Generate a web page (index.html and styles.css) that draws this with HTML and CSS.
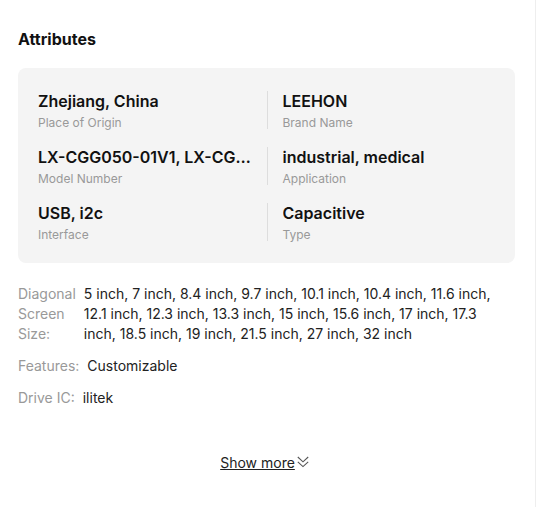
FILE: index.html
```html
<!DOCTYPE html>
<html lang="en">
<head>
    <meta charset="UTF-8">
    <meta name="viewport" content="width=device-width, initial-scale=1.0">
    <title>Attributes</title>
    <link rel="stylesheet" href="styles.css">
</head>
<body>
    <div class="panel">
        <h2 class="panel-title">Attributes</h2>

        <div class="attr-card">
            <div class="attr-item">
                <div class="attr-value">Zhejiang, China</div>
                <div class="attr-label">Place of Origin</div>
            </div>
            <div class="attr-item">
                <div class="attr-value">LEEHON</div>
                <div class="attr-label">Brand Name</div>
            </div>
            <div class="attr-item">
                <div class="attr-value">LX-CGG050-01V1, LX-CGG070-01V1, LX-CGG101-01V1</div>
                <div class="attr-label">Model Number</div>
            </div>
            <div class="attr-item">
                <div class="attr-value">industrial, medical</div>
                <div class="attr-label">Application</div>
            </div>
            <div class="attr-item">
                <div class="attr-value">USB, i2c</div>
                <div class="attr-label">Interface</div>
            </div>
            <div class="attr-item">
                <div class="attr-value">Capacitive</div>
                <div class="attr-label">Type</div>
            </div>
        </div>

        <div class="spec-list">
            <div class="spec-row">
                <span class="spec-label">Diagonal Screen Size:</span>
                <span class="spec-value">5 inch, 7 inch, 8.4 inch, 9.7 inch, 10.1 inch, 10.4 inch, 11.6 inch, 12.1 inch, 12.3 inch, 13.3 inch, 15 inch, 15.6 inch, 17 inch, 17.3 inch, 18.5 inch, 19 inch, 21.5 inch, 27 inch, 32 inch</span>
            </div>
            <div class="spec-row">
                <span class="spec-label">Features:</span>
                <span class="spec-value">Customizable</span>
            </div>
            <div class="spec-row">
                <span class="spec-label">Drive&nbsp;IC:</span>
                <span class="spec-value">ilitek</span>
            </div>
        </div>

        <div class="more">
            <a href="#" class="more-link">Show more</a>
            <svg class="more-icon" width="12" height="12" viewBox="0 0 12 12" fill="none" stroke="currentColor" stroke-width="1.1">
                <path d="M0.8 1l5.2 4.8 5.2-4.8"/>
                <path d="M0.8 5.8l5.2 4.8 5.2-4.8"/>
            </svg>
        </div>
    </div>
</body>
</html>
```

FILE: styles.css
```css
* {
    margin: 0;
    padding: 0;
    box-sizing: border-box;
}

body {
    font-family: Inter, 'Noto Sans', sans-serif;
    background: white;
    color: #111;
}

.panel {
    width: 536px;
    min-height: 507px;
    border-right: 1px solid #eee;
    padding: 28px 20px 0 18px;
}

.panel-title {
    font-size: 16px;
    line-height: 23px;
    font-weight: 700;
    margin-bottom: 17px;
}

.attr-card {
    background: #f4f4f4;
    border-radius: 8px;
    padding: 23px 20px 22px;
    display: grid;
    grid-template-columns: 1fr 1fr;
    row-gap: 18px;
}

.attr-item {
    min-width: 0;
    padding-right: 12px;
}

.attr-item:nth-child(even) {
    border-left: 1px solid #ddd;
    padding-left: 15px;
}

.attr-value {
    font-size: 16px;
    line-height: 20px;
    font-weight: 600;
    white-space: nowrap;
    overflow: hidden;
    text-overflow: ellipsis;
}

.attr-label {
    font-size: 12px;
    line-height: 12px;
    color: #999;
    margin-top: 6px;
}

.spec-list {
    margin-top: 21px;
    padding-right: 16px;
    display: flex;
    flex-direction: column;
    gap: 12px;
    font-size: 14px;
    line-height: 20px;
}

.spec-row {
    display: flex;
    gap: 8px;
}

.spec-label {
    width: min-content;
    flex-shrink: 0;
    color: #999;
}

.spec-value {
    color: #222;
}

.more {
    margin-top: 45px;
    padding-right: 4px;
    display: flex;
    justify-content: center;
    align-items: center;
    gap: 2px;
    font-size: 14px;
    line-height: 20px;
}

.more-link {
    color: #222;
    text-decoration: underline;
}

.more-icon {
    color: #555;
    margin-top: -2px;
}
```
